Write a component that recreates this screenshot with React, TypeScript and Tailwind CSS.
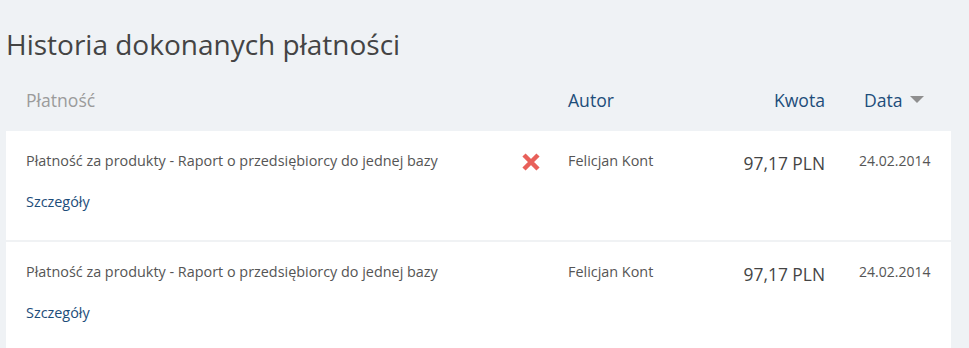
import React from 'react';

type Payment = {
  title: string;
  author: string;
  amount: string;
  date: string;
  failed?: boolean;
};

const payments: Payment[] = [
  {
    title: 'Płatność za produkty - Raport o przedsiębiorcy do jednej bazy',
    author: 'Felicjan Kont',
    amount: '97,17 PLN',
    date: '24.02.2014',
    failed: true,
  },
  {
    title: 'Płatność za produkty - Raport o przedsiębiorcy do jednej bazy',
    author: 'Felicjan Kont',
    amount: '97,17 PLN',
    date: '24.02.2014',
  },
];

const App: React.FC = () => {
  return (
    <div className="min-h-screen bg-[#eff2f5] pl-[6px] pr-[18px] font-['Open_Sans',sans-serif]">
      {/* Title */}
      <h1 className="pt-[25px] text-[28px] leading-[38px] text-[#444444]">
        Historia dokonanych płatności
      </h1>

      {/* Column headers */}
      <div className="mt-[18px] grid h-[38px] grid-cols-[562px_150px_107px_1fr] items-center text-[17.6px]">
        <div className="pl-[20px] text-[#9b9b9b]">Płatność</div>
        <div className="text-[#1d4d7a]">Autor</div>
        <div className="text-right text-[#1d4d7a]">Kwota</div>
        <div className="flex items-center gap-[7px] pl-[39px] text-[#1d4d7a]">
          <span>Data</span>
          <svg width="14" height="7" viewBox="0 0 14 7">
            <path d="M0 0 L14 0 L7 7 Z" fill="#8f8f8f" />
          </svg>
        </div>
      </div>

      {/* Payments card */}
      <div className="mt-[12px] bg-white">
        {payments.map((p, i) => (
          <div
            key={i}
            className="grid h-[111px] grid-cols-[562px_150px_107px_1fr] border-b-2 border-[#f0f2f4] pt-[20px]"
          >
            <div className="flex pl-[20px] pr-[28px]">
              <div className="flex-1">
                <div className="text-[14.4px] leading-[20px] text-[#555555]">{p.title}</div>
                <a href="#" className="mt-[21px] block text-[14.4px] leading-[20px] text-[#1d4d7a]">
                  Szczegóły
                </a>
              </div>
              {p.failed && (
                <svg width="18" height="18" viewBox="0 0 18 18" className="mt-[2px]">
                  <path d="M2 2 L16 16 M16 2 L2 16" stroke="#e8605a" strokeWidth="4.5" strokeLinecap="butt" />
                </svg>
              )}
            </div>
            <div className="text-[14.4px] leading-[20px] text-[#555555]">{p.author}</div>
            <div className="text-right text-[17.4px] leading-[24px] text-[#444444]">{p.amount}</div>
            <div className="pl-[34px] text-[14px] leading-[20px] text-[#555555]">{p.date}</div>
          </div>
        ))}
      </div>
    </div>
  );
};

export default App;
